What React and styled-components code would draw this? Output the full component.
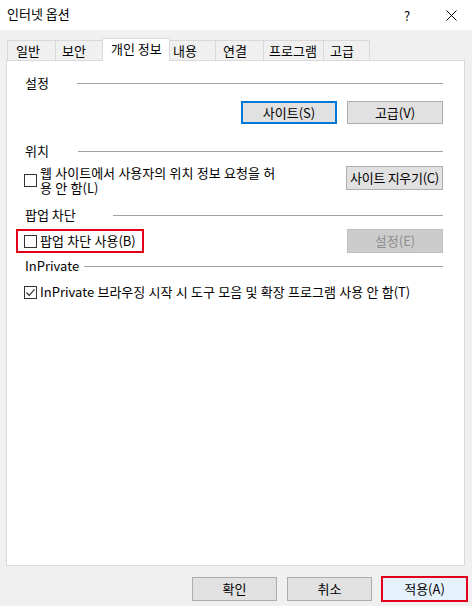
import React from 'react'
import styled, { createGlobalStyle, css } from 'styled-components'

const GlobalStyle = createGlobalStyle`
  html, body {
    margin: 0;
    padding: 0;
  }
  body {
    font-family: "Noto Sans CJK KR", "Noto Sans", sans-serif;
    font-size: 13px;
    color: #000;
  }
`

const tabs = [
  { label: '일반', width: 49, inset: 8 },
  { label: '보안', width: 48, inset: 6 },
  { label: '개인 정보', width: 68, inset: 8, active: true },
  { label: '내용', width: 47, inset: 3 },
  { label: '연결', width: 49, inset: 7 },
  { label: '프로그램', width: 61, inset: 5 },
  { label: '고급', width: 47, inset: 6 },
]

const Window = styled.div`
  width: 472px;
  height: 100vh;
  display: flex;
  flex-direction: column;
  background: #f0f0f0;
  overflow: hidden;
`

const TitleBar = styled.div`
  height: 30px;
  flex-shrink: 0;
  display: flex;
  align-items: center;
  background: #fff;
  padding-left: 7px;
`

const Title = styled.div`
  flex: 1;
  line-height: 14px;
  margin-top: -2px;
`

const TitleButton = styled.div`
  width: ${p => p.$w}px;
  height: 30px;
  display: flex;
  align-items: center;
  justify-content: center;
  font-size: 13px;
`

const TabStrip = styled.div`
  display: flex;
  align-items: flex-end;
  height: 23px;
  margin: 8px 0 -1px 7px;
`

const Tab = styled.div`
  box-sizing: border-box;
  width: ${p => p.$width}px;
  height: 20px;
  margin: 0 -1px 1px 0;
  padding-left: ${p => p.$inset}px;
  border: 1px solid #d9d9d9;
  border-bottom: none;
  background: #f0f0f0;
  display: flex;
  align-items: center;
  line-height: 14px;
  white-space: nowrap;

  ${p => p.$active && css`
    position: relative;
    z-index: 1;
    height: 23px;
    margin-bottom: 0;
    padding-bottom: 3px;
    background: #fff;
  `}
`

const Panel = styled.div`
  flex: 1;
  box-sizing: border-box;
  margin: 0 7px 0 6px;
  padding: 15px 21px 0 17px;
  background: #fff;
  border: 1px solid #d9d9d9;
  display: flex;
  flex-direction: column;
`

const SectionHeader = styled.div`
  display: flex;
  align-items: center;
  height: 14px;
  margin-top: ${p => p.$gap || 0}px;
`

const SectionLabel = styled.div`
  width: ${p => p.$w}px;
  flex-shrink: 0;
  padding-left: 1px;
  box-sizing: border-box;
  line-height: 14px;
  white-space: nowrap;
`

const Rule = styled.div`
  flex: 1;
  height: 1px;
  background: #a0a0a0;
`

const Row = styled.div`
  display: flex;
  justify-content: ${p => p.$justify || 'space-between'};
  align-items: ${p => p.$align || 'center'};
  gap: ${p => p.$gapX || 0}px;
  margin-top: ${p => p.$gap || 0}px;
`

const Button = styled.div`
  box-sizing: border-box;
  width: ${p => p.$w || 96}px;
  height: ${p => p.$h || 24}px;
  display: flex;
  align-items: center;
  justify-content: center;
  background: #e1e1e1;
  border: 1px solid #adadad;
  line-height: 14px;
  white-space: nowrap;
  letter-spacing: ${p => p.$tight ? '-0.3px' : '0'};

  ${p => p.$focused && css`
    border: 2px solid #0078d7;
  `}
  ${p => p.$disabled && css`
    background: #cccccc;
    border-color: #bfbfbf;
    color: #8d8d8d;
  `}
  ${p => p.$marked && css`
    background: #e5f1fb;
    border-color: #0078d7;
    outline: 2px solid #e2001a;
    outline-offset: -1px;
  `}
`

const Check = styled.label`
  display: flex;
  align-items: center;
  gap: 3px;
  line-height: ${p => p.$lh || 14}px;
  word-spacing: 0.4px;
`

const Box = styled.span`
  box-sizing: border-box;
  width: 13px;
  height: 13px;
  flex-shrink: 0;
  border: 1px solid #333;
  background: #fff;
  display: flex;
  align-items: center;
  justify-content: center;
`

const Marked = styled.div`
  border: 2px solid #e2001a;
  padding: 3px 6px 3px 6px;
  margin-left: -8px;
`

const Footer = styled.div`
  flex-shrink: 0;
  display: flex;
  justify-content: flex-end;
  gap: 10px;
  padding: 11px 5px 5px 0;
`

const CheckBox = ({ checked, lh, children }) => (
  <Check $lh={lh}>
    <Box>
      {checked && (
        <svg width="11" height="11" viewBox="0 0 11 11">
          <path d="M1.5 5.5 L4.2 8.3 L9.6 2.4" fill="none" stroke="#333" strokeWidth="1.2" />
        </svg>
      )}
    </Box>
    <span>{children}</span>
  </Check>
)

const App = () => (
  <Window>
    <GlobalStyle />
    <TitleBar>
      <Title>인터넷 옵션</Title>
      <TitleButton $w={46}>?</TitleButton>
      <TitleButton $w={42}>
        <svg width="11" height="11" viewBox="0 0 11 11">
          <path d="M0.5 0.5 L10.5 10.5 M10.5 0.5 L0.5 10.5" stroke="#000" strokeWidth="1" />
        </svg>
      </TitleButton>
    </TitleBar>

    <TabStrip>
      {tabs.map(t => (
        <Tab key={t.label} $width={t.width} $inset={t.inset} $active={t.active}>
          {t.label}
        </Tab>
      ))}
    </TabStrip>

    <Panel>
      <SectionHeader>
        <SectionLabel $w={53}>설정</SectionLabel>
        <Rule />
      </SectionHeader>
      <Row $gap={11} $justify="flex-end" $gapX={10}>
        <Button $h={23} $focused>사이트(S)</Button>
        <Button $h={23}>고급(V)</Button>
      </Row>

      <SectionHeader $gap={20}>
        <SectionLabel $w={54}>위치</SectionLabel>
        <Rule />
      </SectionHeader>
      <Row $gap={7} $align="flex-start">
        <CheckBox lh={15}>
          웹 사이트에서 사용자의 위치 정보 요청을 허<br />용 안 함(L)
        </CheckBox>
        <Button $tight $w={97} style={{ marginTop: 1 }}>사이트 지우기(C)</Button>
      </Row>

      <SectionHeader $gap={13}>
        <SectionLabel $w={89}>팝업 차단</SectionLabel>
        <Rule />
      </SectionHeader>
      <Row $gap={7}>
        <Marked>
          <CheckBox>팝업 차단 사용(B)</CheckBox>
        </Marked>
        <Button $disabled>설정(E)</Button>
      </Row>

      <SectionHeader $gap={6}>
        <SectionLabel $w={60}>InPrivate</SectionLabel>
        <Rule />
      </SectionHeader>
      <Row $gap={12} $justify="flex-start">
        <CheckBox checked>
          InPrivate 브라우징 시작 시 도구 모음 및 확장 프로그램 사용 안 함(T)
        </CheckBox>
      </Row>
    </Panel>

    <Footer>
      <Button $w={85}>확인</Button>
      <Button $w={85}>취소</Button>
      <Button $w={85} $marked>적용(A)</Button>
    </Footer>
  </Window>
)

export default App
